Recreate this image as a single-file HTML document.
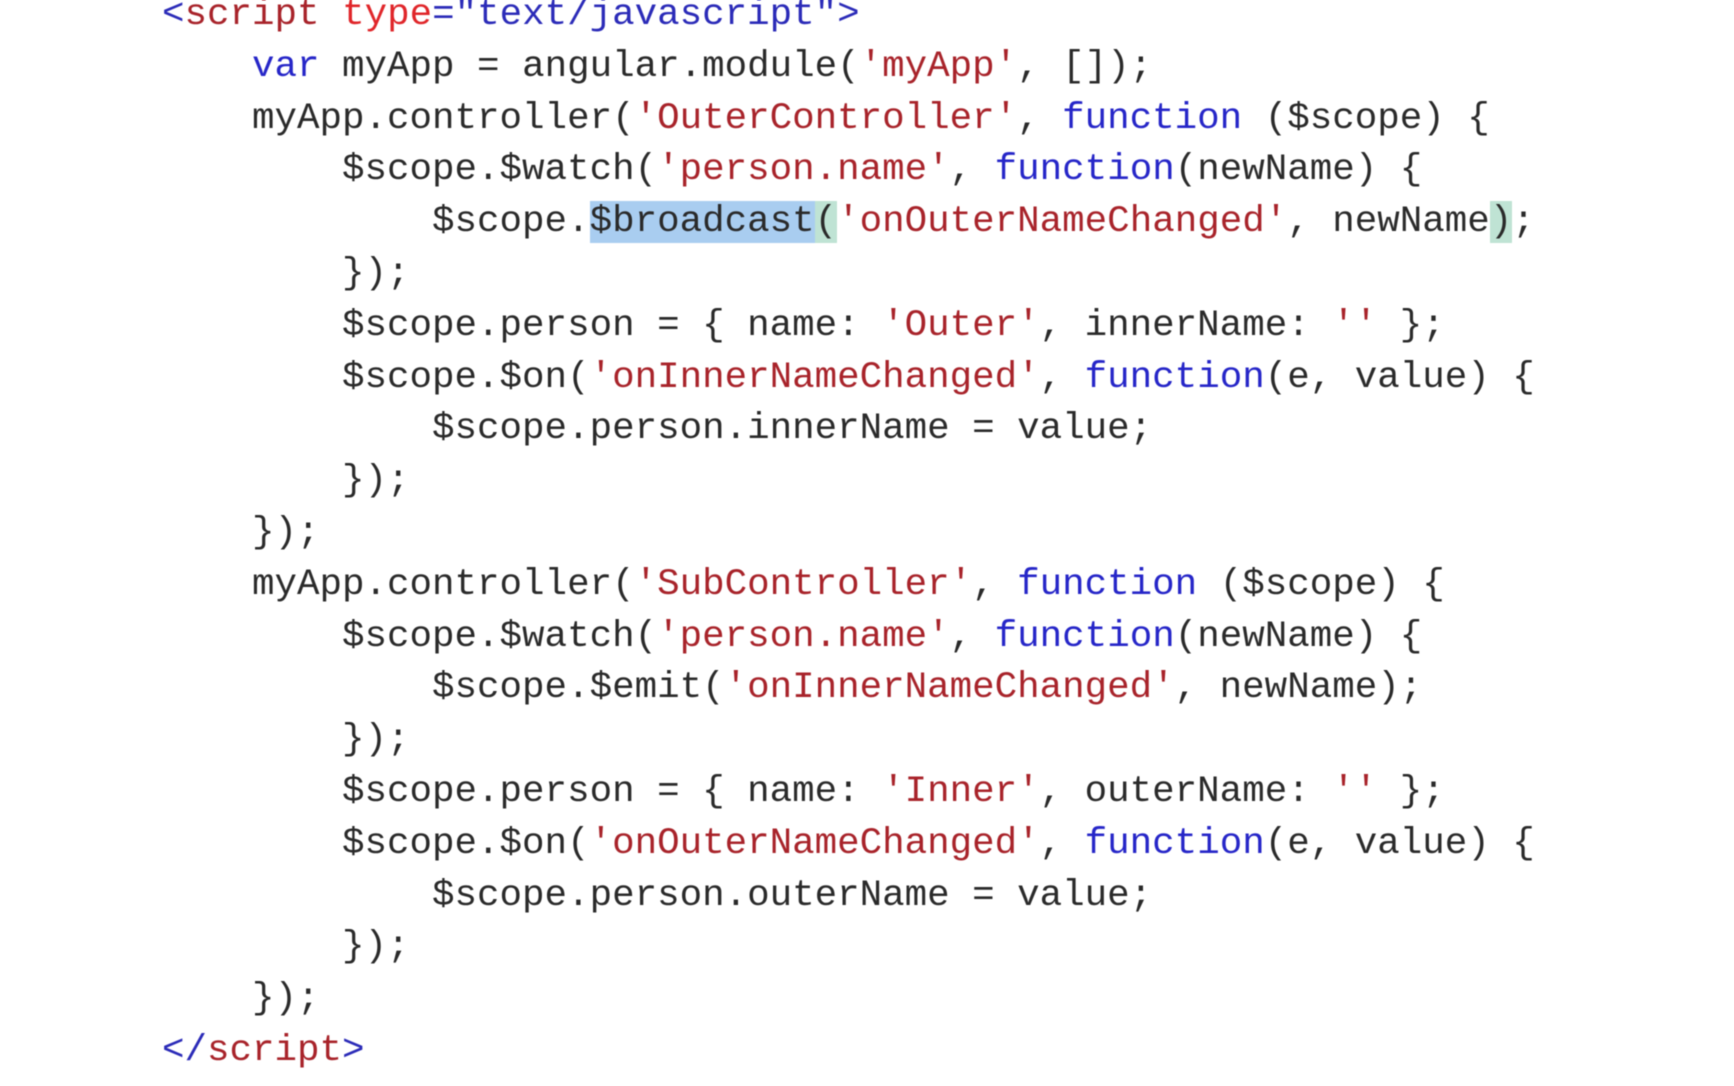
<!DOCTYPE html>
<html><head><meta charset="utf-8"><style>
html,body{margin:0;padding:0;background:#fff;width:1734px;height:1086px;overflow:hidden}
.c{position:absolute;left:0;top:0;font-family:"Liberation Mono",monospace;font-size:37.5px;color:#2a2a2a;line-height:51.8px;filter:blur(0.5px)}
.l{height:51.8px;white-space:pre}
.k{color:#2626c8}.s{color:#a8232a}.t{color:#2b2bb8}.a{color:#e0262a}
.h{background:#a9cdf0}.g{background:#bfe3d4}
</style></head><body>
<div class="c" style="top:-10px;left:162px"><div class="l"><span class="t">&lt;</span><span class="s">script</span> <span class="a">type</span><span class="t">="text/javascript"&gt;</span></div><div class="l">    <span class="k">var</span> myApp = angular.module(<span class="s">'myApp'</span>, []);</div><div class="l">    myApp.controller(<span class="s">'OuterController'</span>, <span class="k">function</span> ($scope) {</div><div class="l">        $scope.$watch(<span class="s">'person.name'</span>, <span class="k">function</span>(newName) {</div><div class="l">            $scope.<span class="h">$broadcast</span><span class="g">(</span><span class="s">'onOuterNameChanged'</span>, newName<span class="g">)</span>;</div><div class="l">        });</div><div class="l">        $scope.person = { name: <span class="s">'Outer'</span>, innerName: <span class="s">''</span> };</div><div class="l">        $scope.$on(<span class="s">'onInnerNameChanged'</span>, <span class="k">function</span>(e, value) {</div><div class="l">            $scope.person.innerName = value;</div><div class="l">        });</div><div class="l">    });</div><div class="l">    myApp.controller(<span class="s">'SubController'</span>, <span class="k">function</span> ($scope) {</div><div class="l">        $scope.$watch(<span class="s">'person.name'</span>, <span class="k">function</span>(newName) {</div><div class="l">            $scope.$emit(<span class="s">'onInnerNameChanged'</span>, newName);</div><div class="l">        });</div><div class="l">        $scope.person = { name: <span class="s">'Inner'</span>, outerName: <span class="s">''</span> };</div><div class="l">        $scope.$on(<span class="s">'onOuterNameChanged'</span>, <span class="k">function</span>(e, value) {</div><div class="l">            $scope.person.outerName = value;</div><div class="l">        });</div><div class="l">    });</div><div class="l"><span class="t">&lt;/</span><span class="s">script</span><span class="t">&gt;</span></div></div>
</body></html>
